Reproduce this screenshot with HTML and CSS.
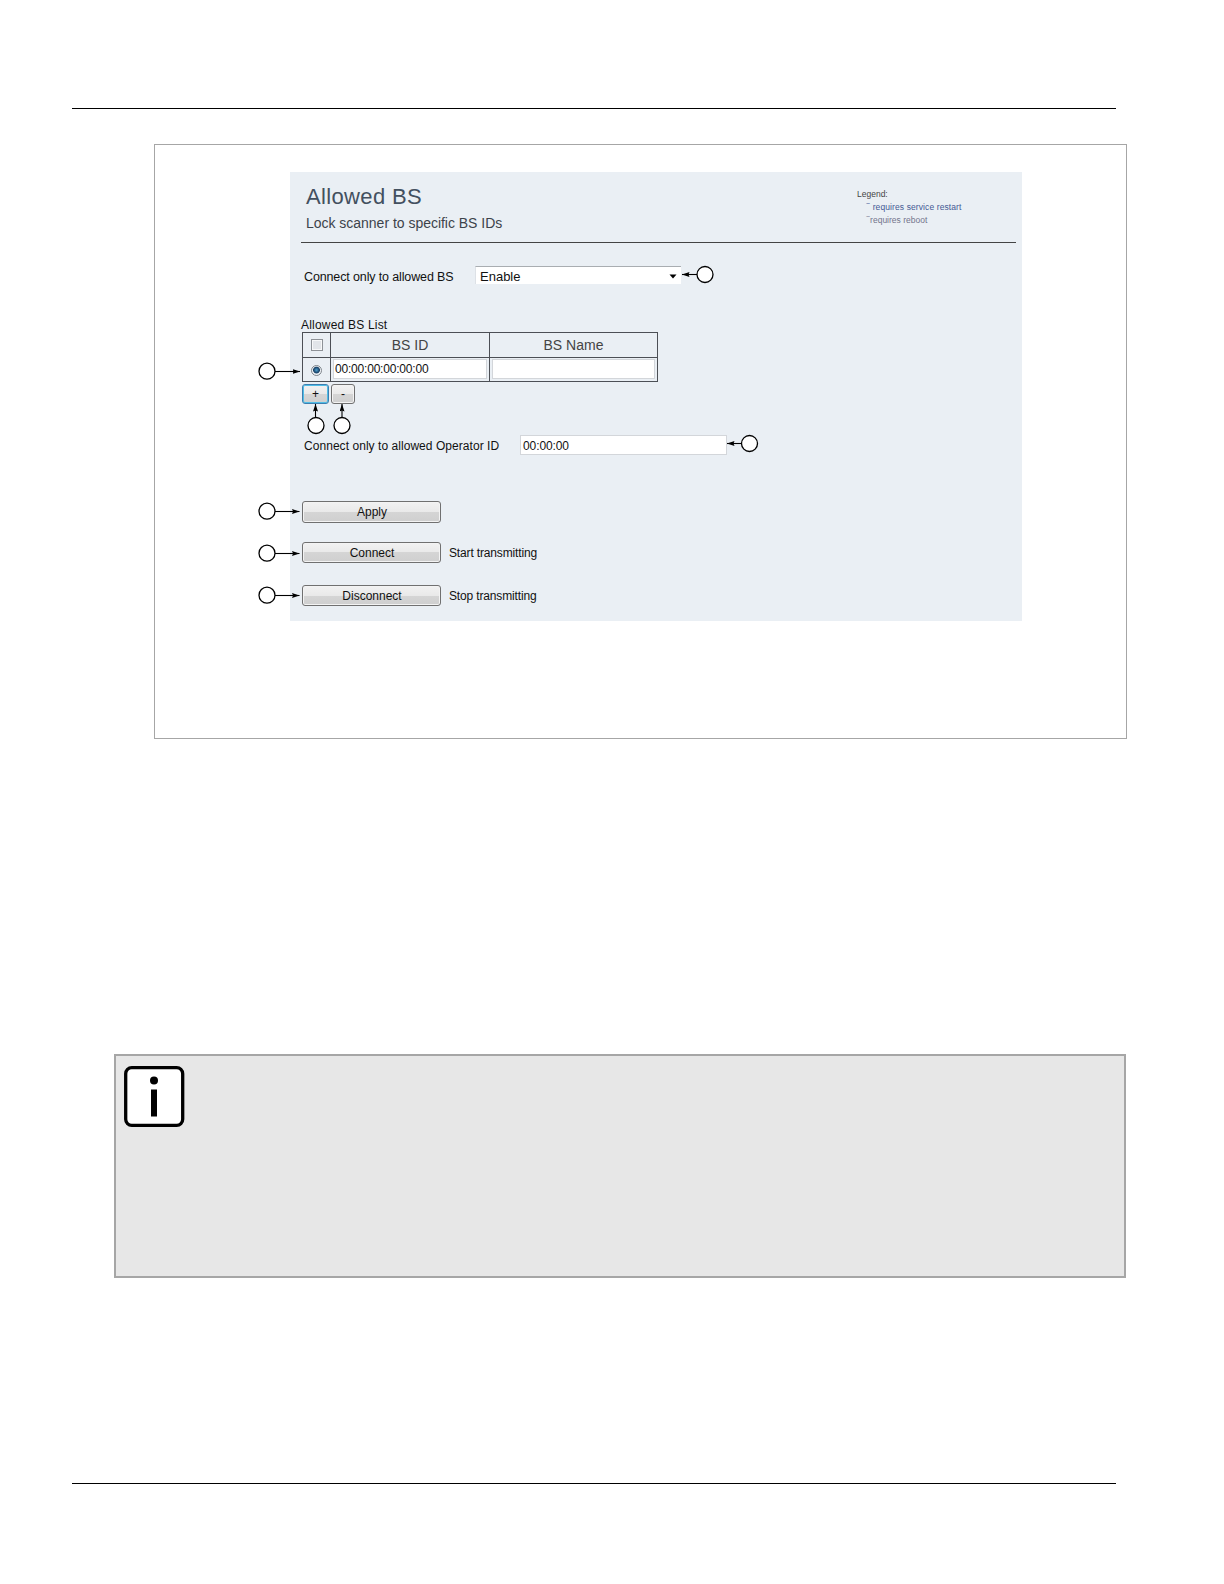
FILE: index.html
```html
<!DOCTYPE html>
<html lang="en">
<head>
    <meta charset="UTF-8">
    <meta name="viewport" content="width=device-width, initial-scale=1.0">
    <title>Allowed BS</title>
    <link rel="stylesheet" href="styles.css">
</head>
<body>

    <main class="page">
        <section class="figure">
            <form class="panel">
                <header class="panel-header">
                    <div>
                        <h1>Allowed BS</h1>
                        <h2>Lock scanner to specific BS IDs</h2>
                    </div>
                    <div class="legend">
                        <p class="legend-title">Legend:</p>
                        <p class="legend-service"><sup>~</sup> requires service restart</p>
                        <p class="legend-reboot"><sup>~</sup>requires reboot</p>
                    </div>
                </header>

                <div class="field field-allowed">
                    <label class="label-allowed">Connect only to allowed BS</label>
                    <div class="select">
                        <span>Enable</span>
                        <svg width="8" height="5" viewBox="0 0 8 5"><path d="M0.5 0.5h7L4 4.5z"/></svg>
                    </div>
                </div>

                <p class="list-title">Allowed BS List</p>
                <table class="bs-table">
                    <tr>
                        <td class="col-pick"><span class="checkbox"></span></td>
                        <th class="col-id">BS ID</th>
                        <th class="col-name">BS Name</th>
                    </tr>
                    <tr>
                        <td class="col-pick"><span class="radio"></span></td>
                        <td><div class="cell-input">00:00:00:00:00:00</div></td>
                        <td><div class="cell-input"></div></td>
                    </tr>
                </table>
                <div class="list-buttons">
                    <button type="button" class="add">+</button>
                    <button type="button" class="remove">-</button>
                </div>

                <div class="field field-operator">
                    <label class="label-operator">Connect only to allowed Operator ID</label>
                    <div class="text-input">00:00:00</div>
                </div>

                <div class="actions">
                    <div class="action"><button type="button">Apply</button></div>
                    <div class="action"><button type="button">Connect</button><span>Start transmitting</span></div>
                    <div class="action"><button type="button">Disconnect</button><span>Stop transmitting</span></div>
                </div>
            </form>

            <!-- callout circles and arrows, drawn over the panel -->
            <svg class="callouts" width="973" height="595" viewBox="154 144 973 595">
                <defs>
                    <marker id="arrow" markerWidth="8" markerHeight="6" refX="7.5" refY="2.5" orient="auto" markerUnits="userSpaceOnUse">
                        <path d="M0 0L7.5 2.5L0 5L1 2.5z"/>
                    </marker>
                </defs>
                <g class="callout-lines">
                    <line x1="697" y1="274.5" x2="682" y2="274.5"/>
                    <line x1="275" y1="371.5" x2="300" y2="371.5"/>
                    <line x1="315.5" y1="418" x2="315.5" y2="404"/>
                    <line x1="342" y1="418" x2="342" y2="404"/>
                    <line x1="741" y1="443.5" x2="727" y2="443.5"/>
                    <line x1="275" y1="511.5" x2="299.5" y2="511.5"/>
                    <line x1="275" y1="553.5" x2="299.5" y2="553.5"/>
                    <line x1="275" y1="595.5" x2="299.5" y2="595.5"/>
                </g>
                <g class="callout-circles">
                    <circle cx="705" cy="274.5" r="8"/>
                    <circle cx="267" cy="371.2" r="8"/>
                    <circle cx="316" cy="425.5" r="8"/>
                    <circle cx="342" cy="425.5" r="8"/>
                    <circle cx="749.5" cy="443.5" r="8"/>
                    <circle cx="267" cy="511.2" r="8"/>
                    <circle cx="267" cy="553.2" r="8"/>
                    <circle cx="267" cy="595.2" r="8"/>
                </g>
            </svg>
        </section>

        <section class="note">
            <svg width="61" height="61" viewBox="0 0 61 61">
                <rect x="1.7" y="1.7" width="57" height="57.6" rx="6" fill="#fff" stroke="#000" stroke-width="3.3"/>
                <circle cx="30" cy="14.5" r="4"/>
                <rect x="27" y="23.5" width="6" height="27"/>
            </svg>
        </section>
    </main>

</body>
</html>
```
FILE: styles.css
```css
* {
    box-sizing: border-box;
}

body {
    margin: 0;
    background-color: #fff;
    font-family: "Liberation Sans", Arial, sans-serif;
    font-size: 12px;
    color: #111;
}

h1, h2, p {
    margin: 0;
    font-weight: normal;
}

.page {
    width: 1044px;
    height: 1376px;
    margin: 108px 0 0 72px;
    border-top: 1px solid #000;
    border-bottom: 1px solid #000;
    padding-top: 35px;
}

.figure {
    position: relative;
    width: 973px;
    height: 595px;
    margin-left: 82px;
    border: 1px solid #a6a6a6;
    padding: 27px 0 0 135px;
}

.panel {
    width: 732px;
    height: 449px;
    background-color: #eaeff4;
    padding: 0 6px 0 11px;
    white-space: nowrap;
}

.panel-header {
    display: flex;
    justify-content: space-between;
    height: 71px;
    border-bottom: 1px solid #444;
    padding: 12px 53px 0 5px;
}

h1 {
    font-size: 22px;
    line-height: 25px;
    letter-spacing: 0.35px;
    color: #43505f;
}

h2 {
    margin-top: 6px;
    font-size: 14px;
    line-height: 16px;
    letter-spacing: -0.02px;
    color: #3d434b;
}

.legend {
    width: 106px;
    padding-top: 4px;
    font-size: 8.5px;
    line-height: 13px;
}

.legend-title {
    color: #444;
}

.legend-service {
    padding-left: 9px;
    letter-spacing: 0.1px;
    color: #455a94;
}

.legend-reboot {
    padding-left: 9px;
    color: #73748c;
}

.legend sup {
    font-size: 7px;
    line-height: 0;
}

.field {
    display: flex;
    align-items: center;
    padding-left: 3px;
}

.field-allowed {
    height: 18px;
    margin-top: 23px;
}

.label-allowed {
    width: 171px;
    padding-top: 3px;
    font-size: 12.5px;
    letter-spacing: -0.13px;
}

.select {
    display: flex;
    align-items: center;
    justify-content: space-between;
    width: 206px;
    height: 18px;
    border-top: 1px solid #a9adb1;
    border-left: 1px solid #dde1e6;
    background-color: #fff;
    padding: 1px 4px 0;
    font-size: 13px;
}

.list-title {
    margin-top: 34px;
    line-height: 14px;
    letter-spacing: 0.2px;
}

.bs-table {
    width: 356px;
    height: 50px;
    margin: 0 0 0 1px;
    border-collapse: collapse;
    table-layout: fixed;
}

.bs-table th,
.bs-table td {
    height: 24px;
    border: 1px solid #4c4f55;
    padding: 0;
}

.bs-table th {
    font-size: 14px;
    line-height: 20px;
    font-weight: normal;
    color: #444;
}

.col-pick {
    width: 28px;
    text-align: center;
}

.col-id {
    width: 159px;
}

.col-name {
    width: 168px;
}

.checkbox {
    display: block;
    width: 12px;
    height: 12px;
    margin: 0 auto;
    border: 1px solid #8e9297;
    background-color: #e2e5e9;
    box-shadow: inset 0 0 0 1px #f7f8f9;
}

.radio {
    display: block;
    width: 11px;
    height: 11px;
    margin: 2px auto 0;
    border: 1px solid #7f858b;
    border-radius: 50%;
    background: radial-gradient(circle at 50% 45%, #4da0cf 0, #173e63 3px, #edf1f5 3.8px);
}

.cell-input {
    height: 20px;
    margin: 0 2px;
    border: 1px solid #d3d6da;
    background-color: #fff;
    padding-left: 1px;
    line-height: 19px;
    letter-spacing: -0.2px;
}

.list-buttons {
    display: flex;
    gap: 2px;
    margin-top: 2px;
    padding-left: 1px;
}

button {
    border: 1px solid #707070;
    border-radius: 3px;
    background: linear-gradient(#f2f2f2 0, #e9e9e9 50%, #d5d5d5 50%, #cfcfcf 100%);
    box-shadow: inset 0 0 0 1px #f3f3f3;
    padding: 0;
    font-family: inherit;
    font-size: 12px;
    color: #111;
}

.add {
    width: 27px;
    height: 20px;
    border-color: #3c7fb1;
    box-shadow: inset 0 0 0 1px #50bde6;
}

.remove {
    width: 24px;
    height: 20px;
}

.field-operator {
    height: 20px;
    margin-top: 31px;
}

.label-operator {
    width: 216px;
    padding-top: 2px;
    letter-spacing: 0.05px;
}

.text-input {
    width: 207px;
    height: 20px;
    border: 1px solid #d3d6da;
    background-color: #fff;
    padding-left: 2px;
    line-height: 20px;
    letter-spacing: -0.1px;
}

.actions {
    display: grid;
    grid-template-rows: 22px 21px 21px;
    row-gap: 20px;
    margin-top: 46px;
    padding-left: 1px;
}

.action {
    display: flex;
    align-items: center;
    gap: 8px;
    letter-spacing: -0.15px;
}

.action:nth-child(2) {
    margin: -1px 0 1px;
}

.action:nth-child(3) {
    margin: 1px 0 -1px;
}

.action button {
    width: 139px;
    height: 100%;
    padding-left: 1px;
}

.callouts {
    position: absolute;
    top: -1px;
    left: -1px;
}

.callout-lines {
    stroke: #000;
    stroke-width: 1.1;
}

.callout-lines line {
    marker-end: url(#arrow);
}

.callout-circles {
    fill: #fff;
    stroke: #000;
    stroke-width: 1.3;
}

.note {
    width: 1012px;
    height: 224px;
    margin: 315px 0 0 42px;
    border: 2px solid #a6a6a6;
    background-color: #e7e7e7;
    padding: 10px 8px;
}
```
